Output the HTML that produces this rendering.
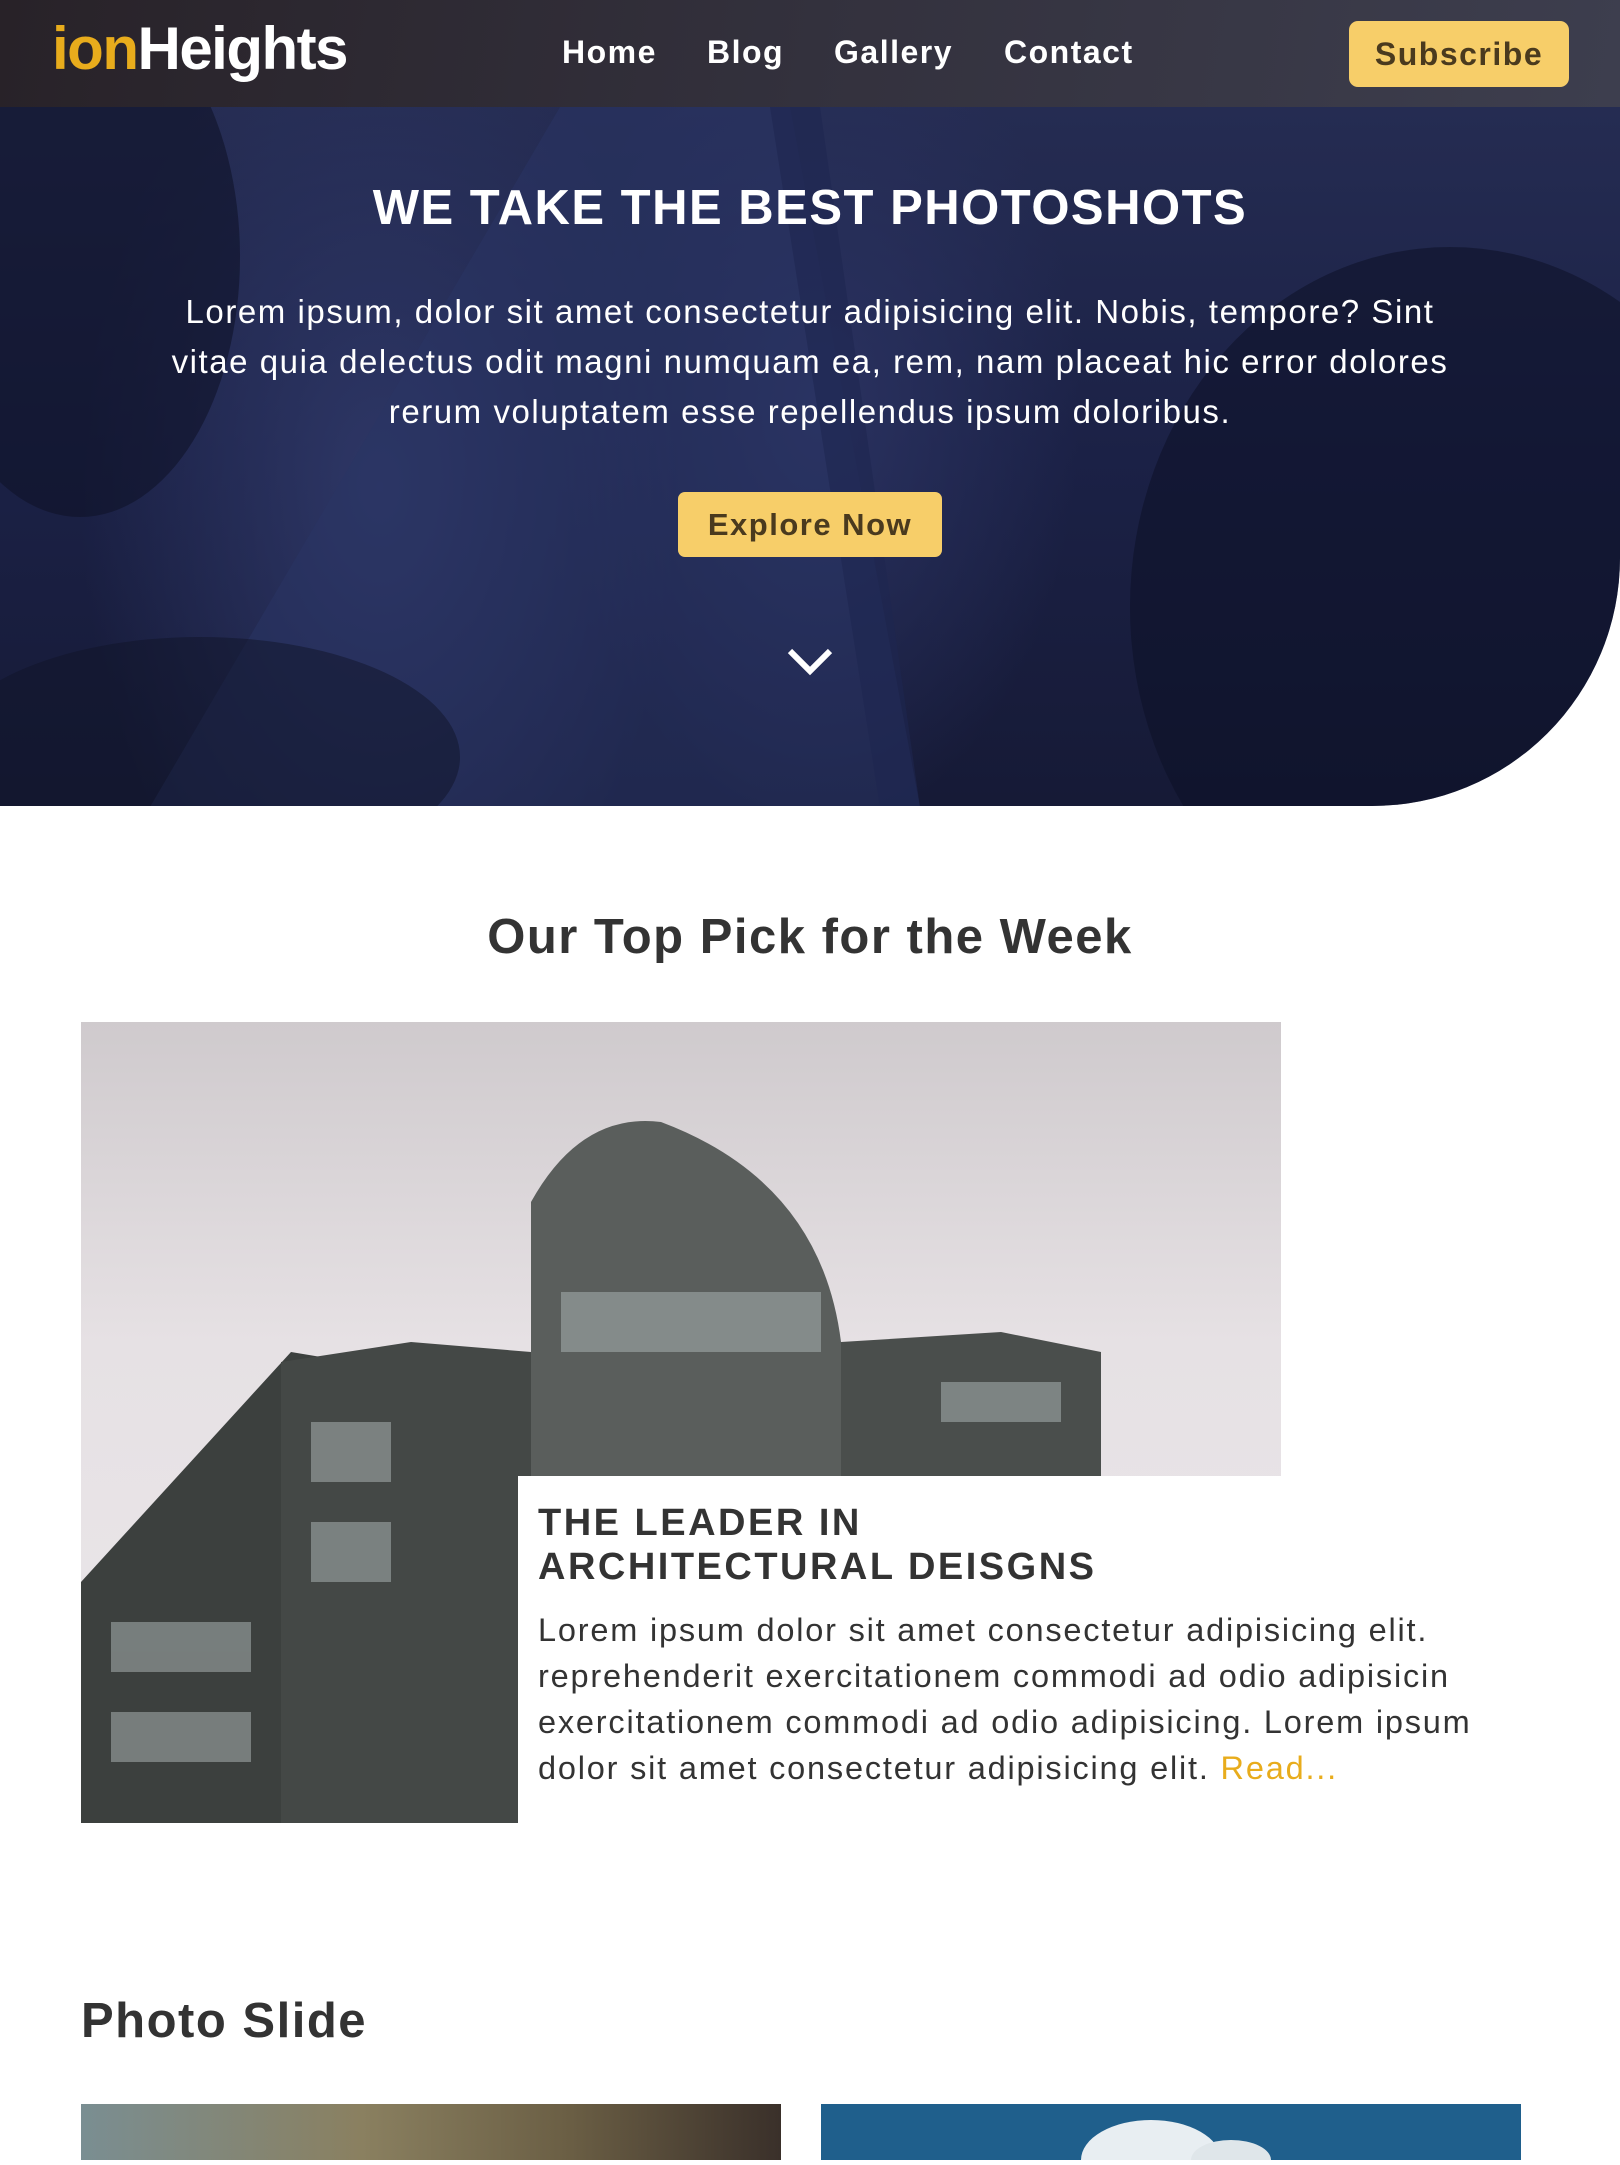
<!DOCTYPE html>
<html><head><meta charset="utf-8"><style>
*{margin:0;padding:0;box-sizing:border-box}
html,body{width:1620px;height:2160px;overflow:hidden;background:#fff;font-family:"Liberation Sans",Arial,sans-serif}
.nav{position:absolute;left:0;top:0;width:1620px;height:107px;background:linear-gradient(100deg,#282228 0%,#33313d 50%,#3d3e4e 100%);z-index:2}
.logo{position:absolute;left:52px;top:14px;font-size:60px;font-weight:bold;color:#fff;letter-spacing:-1.5px}
.logo span{color:#e8ac1c}
.links{position:absolute;top:34px;font-size:32px;font-weight:bold;color:#fff;letter-spacing:1.5px}
.sub{position:absolute;left:1349px;top:21px;width:220px;height:66px;background:#f7ce69;border-radius:9px;color:#4a3a1e;font-weight:bold;font-size:32px;letter-spacing:1.5px;text-align:center;line-height:66px}
.hero{position:absolute;left:0;top:107px;width:1620px;height:699px;border-bottom-right-radius:248px;overflow:hidden;
background:radial-gradient(ellipse 300px 500px at 380px 380px,#2e3766 0%,rgba(40,48,92,0) 100%),radial-gradient(ellipse 260px 420px at 820px 300px,#2a3260 0%,rgba(20,24,60,0) 100%),linear-gradient(180deg,#252c52 0%,#1b2146 50%,#161a36 100%)}
.hero h1{position:absolute;top:73px;width:100%;text-align:center;color:#fff;font-size:49px;letter-spacing:1.5px}
.hero p{position:absolute;top:180px;left:160px;width:1300px;text-align:center;color:#fff;font-size:33px;line-height:50px;letter-spacing:1.55px}
.btn{position:absolute;left:678px;top:385px;width:264px;height:65px;background:#f7ce69;border-radius:7px;color:#4a3a1e;font-weight:bold;font-size:31px;line-height:65px;text-align:center;letter-spacing:1.5px}
h2{position:absolute;color:#333;font-size:49px;font-weight:bold;letter-spacing:1.5px}
.pic{position:absolute;left:81px;top:1022px;width:1200px;height:801px;background:linear-gradient(180deg,#cfcacd 0%,#e6e1e4 40%,#ebe7ea 100%)}
.bld{position:absolute;left:81px;top:1022px;width:1200px;height:801px}
.box{position:absolute;left:518px;top:1476px;width:1003px;height:360px;background:#fff;padding:25px 20px}
.box h3{font-size:38px;color:#333;letter-spacing:2.5px;line-height:44px;font-weight:bold}
.box p{font-size:32.5px;color:#333;line-height:46px;letter-spacing:1.8px;margin-top:18px}
.box a{color:#e8ac1c;text-decoration:none}
.s1{position:absolute;left:81px;top:2104px;width:700px;height:56px;background:linear-gradient(90deg,#7a8e92,#8a8060 40%,#6a5e44 70%,#3a302a)}
.s2{position:absolute;left:821px;top:2104px;width:700px;height:56px;background:#1f5f8c}
</style></head><body>
<div class="nav">
<div class="logo"><span>ion</span>Heights</div>
<div class="links" style="left:562px">Home</div>
<div class="links" style="left:707px">Blog</div>
<div class="links" style="left:834px">Gallery</div>
<div class="links" style="left:1004px">Contact</div>
<div class="sub">Subscribe</div>
</div>
<div class="hero">
<svg width="1620" height="699" style="position:absolute;left:0;top:0">
<polygon points="150,700 560,0 790,0 920,700" fill="#2a3464" opacity=".55"/>
<polygon points="770,0 820,0 920,700 880,700" fill="#1e2650" opacity=".6"/>
<ellipse cx="80" cy="150" rx="160" ry="260" fill="#0f1328" opacity=".6"/>
<ellipse cx="1450" cy="500" rx="320" ry="360" fill="#0d1126" opacity=".55"/>
<ellipse cx="200" cy="650" rx="260" ry="120" fill="#0f1328" opacity=".5"/>
</svg>
<h1>WE TAKE THE BEST PHOTOSHOTS</h1>
<p>Lorem ipsum, dolor sit amet consectetur adipisicing elit. Nobis, tempore? Sint vitae quia delectus odit magni numquam ea, rem, nam placeat hic error dolores rerum voluptatem esse repellendus ipsum doloribus.</p>
<div class="btn">Explore Now</div>
<svg style="position:absolute;left:785px;top:538px" width="50" height="34"><polyline points="5,6 25,26 45,6" fill="none" stroke="#fff" stroke-width="6"/></svg>
</div>
<h2 style="top:909px;width:1620px;text-align:center">Our Top Pick for the Week</h2>
<div class="pic"></div>
<svg class="bld" viewBox="0 0 1200 801">
<polygon points="0,560 210,330 330,350 330,801 0,801" fill="#3c403e"/>
<polygon points="200,340 330,320 450,330 450,801 200,801" fill="#444846"/>
<path d="M450,330 L450,180 Q500,90 580,100 Q740,160 760,320 L760,801 L450,801Z" fill="#5a5e5c"/>
<polygon points="760,320 920,310 1020,330 1020,801 760,801" fill="#4a4e4c"/>
<g fill="#a8b0b0" opacity=".55">
<rect x="480" y="270" width="260" height="60"/><rect x="230" y="400" width="80" height="60"/><rect x="230" y="500" width="80" height="60"/><rect x="30" y="600" width="140" height="50"/><rect x="30" y="690" width="140" height="50"/><rect x="860" y="360" width="120" height="40"/></g>
</svg>
<div class="box"><h3>THE LEADER IN<br>ARCHITECTURAL DEISGNS</h3>
<p>Lorem ipsum dolor sit amet consectetur adipisicing elit. reprehenderit exercitationem commodi ad odio adipisicin exercitationem commodi ad odio adipisicing. Lorem ipsum dolor sit amet consectetur adipisicing elit. <a>Read...</a></p></div>
<h2 style="left:81px;top:1993px">Photo Slide</h2>
<div class="s1"></div>
<div class="s2"><svg width="700" height="56"><ellipse cx="330" cy="56" rx="70" ry="40" fill="#e8eef2"/><ellipse cx="410" cy="56" rx="40" ry="20" fill="#dfe6ea"/></svg></div>
</body></html>
